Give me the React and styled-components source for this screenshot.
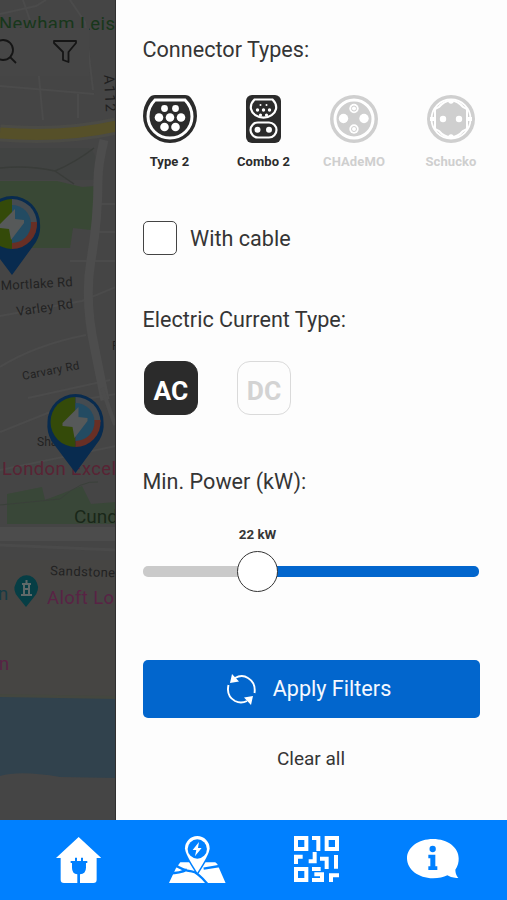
import React from 'react'
import styled, { createGlobalStyle } from 'styled-components'

const GlobalStyle = createGlobalStyle`
  * {
    box-sizing: border-box;
  }
  body {
    margin: 0;
    font-family: Roboto, 'Liberation Sans', sans-serif;
    color: #353535;
  }
  svg {
    display: block;
    flex: none;
  }
  button {
    font: inherit;
    color: inherit;
    background: none;
    border: 0;
    padding: 0;
  }
`

const Screen = styled.div`
  display: flex;
  flex-direction: column;
  width: 507px;
  height: 900px;
  overflow: hidden;
`

const Body = styled.div`
  display: flex;
  height: 820px;
`

const MapPane = styled.div`
  width: 116px;
  overflow: hidden;
  background: #464646;
`

const Drawer = styled.aside`
  flex: 1;
  display: flex;
  flex-direction: column;
  padding: 36px 27px 0;
  background: #fdfdfd;
`

const Heading = styled.h2`
  margin: 0 0 0 -0.5px;
  font-size: 21.6px;
  font-weight: 400;
  line-height: 28px;
  white-space: nowrap;
`

const Connectors = styled.div`
  display: flex;
  margin-top: 31px;
  margin-left: -0.5px;
`

const Connector = styled.button`
  display: flex;
  flex-direction: column;
  align-items: center;
  width: ${p => p.$width}px;
  margin-left: ${p => p.$gap || 0}px;
  color: ${p => (p.$active ? '#2b2b2b' : '#cfcfcf')};
`

const Caption = styled.span`
  margin-top: 11px;
  font-size: 13px;
  font-weight: 700;
  line-height: 16px;
  letter-spacing: 0.1px;
  white-space: nowrap;
`

const CheckRow = styled.label`
  display: flex;
  align-items: center;
  gap: 13px;
  height: 34px;
  margin-top: 51px;
  margin-bottom: 51px;
  font-size: 21.6px;
`

const Checkbox = styled.span`
  width: 34px;
  height: 34px;
  border: 1.5px solid #444;
  border-radius: 5px;
  background: #fff;
`

const Currents = styled.div`
  display: flex;
  gap: 39px;
  margin: 27px 0 53px 1px;
`

const Current = styled.button`
  width: 54px;
  height: 54px;
  padding-top: 6px;
  border-radius: 13px;
  border: 1.5px solid ${p => (p.$active ? '#2b2b2b' : '#dadada')};
  background: ${p => (p.$active ? '#2b2b2b' : '#fdfdfd')};
  color: ${p => (p.$active ? '#fff' : '#d3d3d3')};
  font-size: 26.4px;
  font-weight: 700;
  line-height: 1;
`

const Slider = styled.div`
  display: flex;
  align-items: center;
  width: 336px;
  height: 41px;
`

const SliderValue = styled.div`
  width: 229px;
  margin-top: 31px;
  margin-bottom: 8px;
  font-size: 13.4px;
  font-weight: 700;
  line-height: 16px;
  text-align: center;
`

const Rail = styled.div`
  width: ${p => p.$width}px;
  flex: ${p => (p.$width ? 'none' : 1)};
  height: 11px;
  background: ${p => (p.$filled ? '#0266cd' : '#cacaca')};
  border-radius: ${p => (p.$filled ? '0 5px 5px 0' : '5px 0 0 5px')};
`

const Thumb = styled.div`
  width: 41px;
  height: 41px;
  margin: 0 -1px;
  border: 1.3px solid #333;
  border-radius: 50%;
  background: #fff;
  z-index: 1;
`

const ApplyButton = styled.button`
  display: flex;
  align-items: center;
  justify-content: center;
  gap: 17px;
  height: 58px;
  margin-top: 68px;
  padding-right: 5px;
  border-radius: 5px;
  background: #0266cd;
  color: #f4f8ff;
  font-size: 21.6px;
  line-height: 28px;
`

const ClearButton = styled.button`
  margin-top: 29px;
  padding-right: 1px;
  font-size: 19px;
  line-height: 24px;
`

const TabBar = styled.nav`
  display: flex;
  align-items: flex-start;
  height: 80px;
  background: #0080ff;
  color: #fff;
`

const Tab = styled.a`
  margin-left: ${p => p.$gap}px;
  margin-top: ${p => p.$top || 16}px;
`

const Pin = ({ x, y }) => (
  <g transform={`translate(${x} ${y})`}>
    <path d='M-24 19 Q-29 10 -28 0 A28 28 0 0 1 28 0 Q29 9 24 18 L0 51Z' fill='#082b4f' />
    <path d='M0 -25A25 25 0 0 0 0 25Z' fill='#344a09' />
    <path d='M0 -25A25 25 0 0 1 25 0H0Z' fill='#454b50' />
    <path d='M25 -2A25 25 0 0 1 0 25V-2Z' fill='#682f25' />
    <path d='M0 -19A19 19 0 0 1 0 19Z' fill='#234b62' />
    <path d='M3 -15L-13 1V4L-3 5L-1 16L12 -1V-4L3 -5Z' fill='#565959' />
  </g>
)

const AreaMap = () => (
  <svg width='116' height='820' viewBox='0 0 116 820' fill='none' fontFamily='Roboto, sans-serif'>
    <rect width='116' height='820' fill='#454545' />
    <path d='M0 148H88Q98 150 97 180H0Z' fill='#414342' />
    <path d='M0 181H57L82 187L97 186L91 230L73 228L70 248H0Z' fill='#394835' />
    <g stroke='#4b4b4b' strokeWidth='2'>
      <path d='M23 0L35 35L43 120' />
      <path d='M0 14L36 6L46 0M70 0L85 22L93 90M0 86L94 94M78 94V118' />
      <path d='M70 261H116M0 316L82 301L116 287M0 367Q35 345 86 335M96 204H116M95 232H116' />
      <path d='M0 432L80 400L116 394M28 398L110 380M0 470L116 446' />
    </g>
    <path d='M0 168Q28 165 55 171Q76 162 94 148M55 171L74 184' stroke='#393c39' strokeWidth='1.500' />
    <path d='M104 140Q98 165 98 180Q98 220 91 260T95 350L105 400' stroke='#4d4d4d' strokeWidth='9' />
    <path d='M102 388L115 425' stroke='#4c4c4c' strokeWidth='4' />
    <path d='M0 133Q63 138 116 126' stroke='#4b4b46' strokeWidth='17' />
    <path d='M0 133Q63 138 116 126' stroke='#565029' strokeWidth='11' />
    <path d='M7 494L42 487L45 500L82 486L91 504L116 502V524H7Z' fill='#394738' />
    <path d='M0 505L60 499Q82 480 98 482' stroke='#3a403a' strokeWidth='1' />
    <path d='M0 527H116V541H0Z' fill='#4c4c4c' />
    <path d='M0 545L116 550M0 575H116' stroke='#4a4a4a' strokeWidth='3' />
    <path d='M0 560H116V700H0Z' fill='#464543' />
    <path d='M0 694L116 696V701H0Z' fill='#44473f' />
    <path d='M0 697L116 699V778L60 777Q20 770 0 776Z' fill='#31424d' />
    <text x='-1' y='30' fontSize='18.500' fill='#18371b' textLength='116'>Newham Leis</text>
    <path d='M0 28H89V76H0Z' fill='#464646' />
    <g stroke='#151515' strokeWidth='1.800'>
      <circle cx='3' cy='50' r='10' />
      <path d='M10 57L16 63' />
      <path d='M54 41H76V43L68.500 52V62L63 60V52L54 43Z' strokeLinejoin='round' />
    </g>
    <text transform='translate(104 75) rotate(87)' fontSize='14.500' fill='#202020' textLength='37'>A112</text>
    <Pin x={12} y={224} />
    <g fill='#222'>
      <text transform='translate(1 290) rotate(-3)' fontSize='13' textLength='72'>Mortlake Rd</text>
      <text transform='translate(17 316) rotate(-8)' fontSize='13' textLength='57'>Varley Rd</text>
      <text transform='translate(23 380) rotate(-11)' fontSize='11.500' textLength='58'>Carvary Rd</text>
      <text x='37' y='446' fontSize='12'>Sha</text>
      <text x='112' y='350' fontSize='12'>F</text>
      <text transform='translate(50 575) rotate(2)' fontSize='13' textLength='65'>Sandstone</text>
    </g>
    <text x='2' y='475' fontSize='18.500' fill='#592334' textLength='114'>London Excel</text>
    <Pin x={75.5} y={422} />
    <text x='74' y='523' fontSize='19' fill='#192719'>Cund</text>
    <path d='M26 607L18 597Q12 590 16 583A11 11 0 0 1 37 583Q40 590 34 597Z' fill='#063e45' />
    <path d='M22 584H31M24 584V595M29 584V595M21 595H32M23 589H30M26.500 580V584' stroke='#606969' strokeWidth='2' />
    <text x='-2' y='600' fontSize='18.500' fill='#163b45'>n</text>
    <text x='47' y='604' fontSize='18.500' fill='#592345' textLength='67'>Aloft Lo</text>
    <text x='-1' y='670' fontSize='18.500' fill='#592345'>n</text>
    <path d='M115.500 0V820' stroke='#303030' />
  </svg>
)

const Type2Icon = () => (
  <svg width='54' height='48' viewBox='0 0 54 48'>
    <path d='M12 0H42Q46 0 48 3Q54 11 54 21A27 27 0 0 1 0 21Q0 11 6 3Q8 0 12 0Z' fill='currentColor' />
    <path d='M12 5H42Q49 12 49 21.500A22 21.500 0 0 1 5 21.500Q5 12 12 5Z' fill='none' stroke='#fff' strokeWidth='3' />
    <g fill='#fff'>
      <circle cx='21.500' cy='13.500' r='3.400' />
      <circle cx='32.500' cy='13.500' r='3.400' />
      <circle cx='16' cy='22.500' r='4.300' />
      <circle cx='27' cy='22.500' r='4.300' />
      <circle cx='38' cy='22.500' r='4.300' />
      <circle cx='21.500' cy='32' r='4.300' />
      <circle cx='32.500' cy='32' r='4.300' />
    </g>
  </svg>
)

const Combo2Icon = () => (
  <svg width='35' height='48' viewBox='0 0 35 48'>
    <rect width='35' height='48' rx='6' fill='currentColor' />
    <g fill='none' stroke='#fff' strokeWidth='2.200'>
      <path d='M8.500 4.500H26.500Q31 9 30 14A12.700 10.500 0 0 1 5 14Q4 9 8.500 4.500Z' />
      <rect x='4.500' y='27.500' width='26' height='15' rx='7.500' />
    </g>
    <g fill='#fff'>
      <circle cx='14.500' cy='10' r='1' />
      <circle cx='20.500' cy='10' r='1' />
      <circle cx='11.500' cy='15' r='1.700' />
      <circle cx='17.500' cy='15' r='1.700' />
      <circle cx='23.500' cy='15' r='1.700' />
      <circle cx='14.500' cy='20' r='1.600' />
      <circle cx='20.500' cy='20' r='1.600' />
      <circle cx='11.500' cy='34.700' r='3' />
      <circle cx='23' cy='34.700' r='3' />
    </g>
  </svg>
)

const ChademoIcon = () => (
  <svg width='48' height='48' viewBox='0 0 48 48'>
    <circle cx='24' cy='24' r='24' fill='currentColor' />
    <circle cx='24' cy='24' r='19' fill='none' stroke='#fff' strokeWidth='3' />
    <g fill='#fff'>
      <circle cx='13.500' cy='23.500' r='4.700' />
      <circle cx='34' cy='23.500' r='4.700' />
      <circle cx='24' cy='13.500' r='4.700' />
      <circle cx='24' cy='34' r='4.700' />
    </g>
    <g fill='none' stroke='currentColor'>
      <circle cx='24' cy='13.500' r='2.500' />
      <circle cx='24' cy='34' r='2.500' />
    </g>
  </svg>
)

const SchuckoIcon = () => (
  <svg width='48' height='48' viewBox='0 0 48 48'>
    <circle cx='24' cy='24' r='24' fill='currentColor' />
    <circle cx='24' cy='24' r='19.500' fill='none' stroke='#fff' strokeWidth='1.800' />
    <path
      d='M8 14L12 12Q17 6 24 5.500Q31 6 36 12L40 14V34L36 36Q31 42 24 42.500Q17 42 12 36L8 34Z'
      fill='currentColor'
      stroke='#fff'
      strokeWidth='2'
    />
    <path d='M21.500 5H26.500V7.500Q24 10 21.500 7.500ZM21.500 43H26.500V40.500Q24 38 21.500 40.500Z' fill='#fff' />
    <path d='M3 24H8M40 24H45' stroke='#fff' strokeWidth='4' />
    <circle cx='16' cy='24' r='3.200' fill='#fff' />
    <circle cx='32' cy='24' r='3.200' fill='#fff' />
  </svg>
)

const RefreshIcon = () => (
  <svg width='29' height='31' viewBox='0 0 29 31' fill='none'>
    <path d='M1.500 11Q-1 22 8 27Q14 30 20 27M8 4Q15 0 21 4Q29 9 27.500 19' stroke='#fff' strokeWidth='1.900' />
    <path d='M5 0L12 7.500L3 9ZM17 23.500L26 22L24 31Z' fill='#fff' />
  </svg>
)

const HomeIcon = () => (
  <svg width='45.300' height='46' viewBox='0 0 136 138'>
    <path
      d='M68 0L136 63H122V128Q122 138 112 138H72V112Q90 110 90 92V78H94V72H81V62H75V72H63V62H57V72H44V78H48V92Q48 110 64 112V138H24Q14 138 14 128V63H0Z'
      fill='currentColor'
    />
  </svg>
)

const MapPinIcon = () => (
  <svg width='56.600' height='47' viewBox='0 0 170 141'>
    <path d='M34 79H139L145 84L170 141H0L20 98Z' fill='currentColor' />
    <path
      d='M14 84Q42 104 68 106Q86 108 116 145M2 112Q32 112 54 101M104 98L152 90'
      fill='none'
      stroke='#0080ff'
      strokeWidth='7'
    />
    <path
      d='M85 0A37 37 0 0 1 122 37Q122 54 85 110Q48 54 48 37A37 37 0 0 1 85 0Z'
      fill='currentColor'
      stroke='#0080ff'
      strokeWidth='9'
      paintOrder='stroke'
    />
    <circle cx='85' cy='39' r='29' fill='#0080ff' />
    <path d='M90 18L71 42H82L78 61L98 36H87Z' fill='currentColor' />
  </svg>
)

const QrIcon = () => (
  <svg width='45' height='46' viewBox='0 0 135 138'>
    <g fill='none' stroke='currentColor' strokeWidth='12'>
      <path d='M6 6H37V39H6ZM98 6H129V39H98ZM6 99H37V132H6Z' />
      <path d='M54 6H73V45M6 84V62H26M44 76H62V48M78 68H98V99M126 57V98M54 99H80M54 132H84V115H61M111 138V118H135' />
    </g>
    <path d='M17 17H26V28H17ZM109 17H118V28H109ZM17 110H26V121H17Z' fill='#0080ff' />
  </svg>
)

const InfoIcon = () => (
  <svg width='52' height='40' viewBox='0 0 156 120'>
    <path d='M78 0C34 0 0 25 0 58S34 118 78 118Q104 118 121 109Q136 119 154 117Q145 107 145 92Q156 77 155 58C155 25 122 0 78 0Z' fill='currentColor' />
    <circle cx='77' cy='30' r='9.500' fill='#0080ff' />
    <path d='M64 47H85V82H91V93H64V82H70V58H64Z' fill='#0080ff' />
  </svg>
)

class App extends React.PureComponent {
  render() {
    return (
      <Screen>
        <GlobalStyle />
        <Body>
          <MapPane>
            <AreaMap />
          </MapPane>
          <Drawer>
            <Heading>Connector Types:</Heading>
            <Connectors>
              <Connector $active $width={54}>
                <Type2Icon />
                <Caption>Type 2</Caption>
              </Connector>
              <Connector $active $width={54} $gap={40}>
                <Combo2Icon />
                <Caption>Combo 2</Caption>
              </Connector>
              <Connector $width={63} $gap={32}>
                <ChademoIcon />
                <Caption>CHAdeMO</Caption>
              </Connector>
              <Connector $width={53} $gap={39}>
                <SchuckoIcon />
                <Caption>Schucko</Caption>
              </Connector>
            </Connectors>
            <CheckRow>
              <Checkbox />
              With cable
            </CheckRow>
            <Heading>Electric Current Type:</Heading>
            <Currents>
              <Current $active>AC</Current>
              <Current>DC</Current>
            </Currents>
            <Heading>Min. Power (kW):</Heading>
            <SliderValue>22 kW</SliderValue>
            <Slider>
              <Rail $width={95} />
              <Thumb />
              <Rail $filled />
            </Slider>
            <ApplyButton>
              <RefreshIcon />
              Apply Filters
            </ApplyButton>
            <ClearButton>Clear all</ClearButton>
          </Drawer>
        </Body>
        <TabBar>
          <Tab $gap={56} $top={17}>
            <HomeIcon />
          </Tab>
          <Tab $gap={68}>
            <MapPinIcon />
          </Tab>
          <Tab $gap={68}>
            <QrIcon />
          </Tab>
          <Tab $gap={68} $top={19}>
            <InfoIcon />
          </Tab>
        </TabBar>
      </Screen>
    )
  }
}

export default App
